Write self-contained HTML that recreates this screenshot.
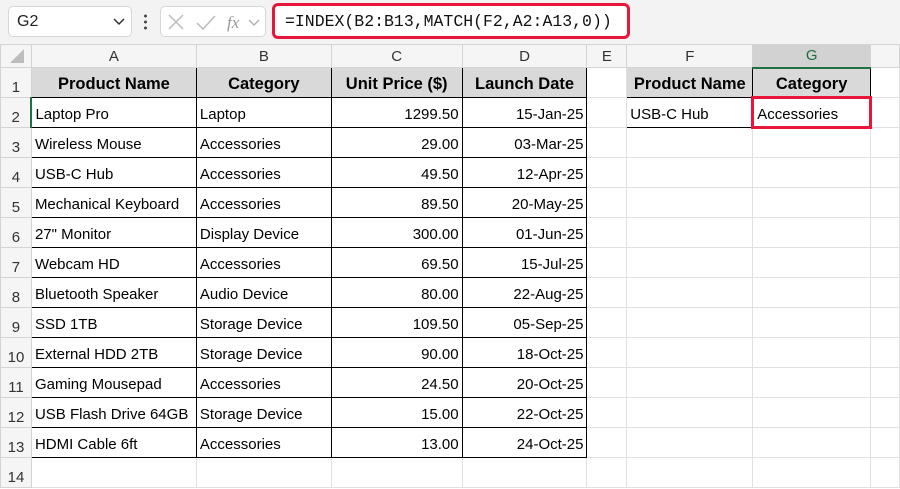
<!DOCTYPE html>
<html><head><style>
*{margin:0;padding:0;box-sizing:border-box}
body{width:900px;height:489px;overflow:hidden;background:#fff;font-family:"Liberation Sans",Arial,sans-serif;position:relative}
.top{position:absolute;left:0;top:0;width:900px;height:44px;background:#f3f3f3}
.nb{position:absolute;left:8px;top:6px;width:124px;height:31px;background:#fff;border:1px solid #d6d6d6;border-radius:5px;font-size:16px;padding:6px 0 0 8px;color:#222}
.fxb{position:absolute;left:160px;top:6px;width:106px;height:31px;background:#fff;border:1px solid #d6d6d6;border-radius:5px}
.fb{position:absolute;left:272px;top:3px;width:358px;height:36px;background:#fff;border:3px solid #e8163a;border-radius:6px;font-family:"Liberation Mono",monospace;font-size:16.5px;padding:6px 0 0 10px;color:#111}
table{position:absolute;left:0;top:44px;border-collapse:collapse;table-layout:fixed}
td{border:1px solid #e1e1e1;font-size:15px;white-space:nowrap;overflow:hidden;padding:4px 3px 0 3px;color:#000;height:30px}
tr.ch td{height:23px;background:#f5f5f5;color:#333;text-align:center;font-size:15px;border-color:#d4d4d4;padding:0}
td.rh{background:#f5f5f5;color:#333;text-align:center;font-size:15px;padding:0;border-color:#d4d4d4;vertical-align:bottom;padding-bottom:1px}
td.h{background:#d9d9d9;font-weight:bold;text-align:center;font-size:16.5px;border:1px solid #000}
td.b{border:1px solid #000}
td.r{text-align:right}
</style></head><body>
<div class="top"></div>
<div class="nb">G2<svg style="position:absolute;right:6px;top:11px" width="12" height="8"><path d="M1 1L6 6L11 1" stroke="#333" stroke-width="1.5" fill="none"/></svg></div>
<div style="position:absolute;left:144px;top:13px;width:3px;height:17px;background:radial-gradient(circle,#444 1.3px,transparent 1.6px) 0 0/3px 6px"></div>
<div class="fxb"><svg width="106" height="31"><path d="M8 8L22 22M22 8L8 22" stroke="#bbb" stroke-width="1.5"/><path d="M36 16L42 22L54 9" stroke="#bbb" stroke-width="1.5" fill="none"/><text x="66" y="21" font-family="Liberation Serif" font-style="italic" font-size="17" fill="#999">fx</text><path d="M88 13L93 18L98 13" stroke="#aaa" stroke-width="1.3" fill="none"/></svg></div>
<div class="fb">=INDEX(B2:B13,MATCH(F2,A2:A13,0))</div>
<table>
<colgroup><col style="width:31px"><col style="width:165px"><col style="width:135px"><col style="width:131px"><col style="width:125px"><col style="width:40px"><col style="width:126px"><col style="width:118px"><col style="width:29px"></colgroup>
<tr class="ch"><td style="background:#f5f5f5"><svg width="20" height="18" style="position:relative;top:2px;left:2px"><path d="M16 2L16 16L2 16Z" fill="#bdbdbd"/></svg></td><td>A</td><td>B</td><td>C</td><td>D</td><td>E</td><td>F</td><td style="background:#d2d2d2;color:#1e6e3c;border-bottom:2px solid #1e7145">G</td><td></td></tr>
<tr><td class="rh">1</td><td class="h">Product Name</td><td class="h">Category</td><td class="h">Unit Price ($)</td><td class="h">Launch Date</td><td></td><td class="h">Product Name</td><td class="h">Category</td><td></td></tr>
<tr><td class="rh" style="border-right:2px solid #1e7145">2</td><td class="b">Laptop Pro</td><td class="b">Laptop</td><td class="b r">1299.50</td><td class="b r">15-Jan-25</td><td></td><td class="b">USB-C Hub</td><td style="border:3px solid #e8163a;border-radius:3px">Accessories</td><td></td></tr>
<tr><td class="rh">3</td><td class="b">Wireless Mouse</td><td class="b">Accessories</td><td class="b r">29.00</td><td class="b r">03-Mar-25</td><td></td><td></td><td></td><td></td></tr>
<tr><td class="rh">4</td><td class="b">USB-C Hub</td><td class="b">Accessories</td><td class="b r">49.50</td><td class="b r">12-Apr-25</td><td></td><td></td><td></td><td></td></tr>
<tr><td class="rh">5</td><td class="b">Mechanical Keyboard</td><td class="b">Accessories</td><td class="b r">89.50</td><td class="b r">20-May-25</td><td></td><td></td><td></td><td></td></tr>
<tr><td class="rh">6</td><td class="b">27" Monitor</td><td class="b">Display Device</td><td class="b r">300.00</td><td class="b r">01-Jun-25</td><td></td><td></td><td></td><td></td></tr>
<tr><td class="rh">7</td><td class="b">Webcam HD</td><td class="b">Accessories</td><td class="b r">69.50</td><td class="b r">15-Jul-25</td><td></td><td></td><td></td><td></td></tr>
<tr><td class="rh">8</td><td class="b">Bluetooth Speaker</td><td class="b">Audio Device</td><td class="b r">80.00</td><td class="b r">22-Aug-25</td><td></td><td></td><td></td><td></td></tr>
<tr><td class="rh">9</td><td class="b">SSD 1TB</td><td class="b">Storage Device</td><td class="b r">109.50</td><td class="b r">05-Sep-25</td><td></td><td></td><td></td><td></td></tr>
<tr><td class="rh">10</td><td class="b">External HDD 2TB</td><td class="b">Storage Device</td><td class="b r">90.00</td><td class="b r">18-Oct-25</td><td></td><td></td><td></td><td></td></tr>
<tr><td class="rh">11</td><td class="b">Gaming Mousepad</td><td class="b">Accessories</td><td class="b r">24.50</td><td class="b r">20-Oct-25</td><td></td><td></td><td></td><td></td></tr>
<tr><td class="rh">12</td><td class="b">USB Flash Drive 64GB</td><td class="b">Storage Device</td><td class="b r">15.00</td><td class="b r">22-Oct-25</td><td></td><td></td><td></td><td></td></tr>
<tr><td class="rh">13</td><td class="b">HDMI Cable 6ft</td><td class="b">Accessories</td><td class="b r">13.00</td><td class="b r">24-Oct-25</td><td></td><td></td><td></td><td></td></tr>
<tr><td class="rh">14</td><td></td><td></td><td></td><td></td><td></td><td></td><td></td><td></td></tr>
</table>
</body></html>
